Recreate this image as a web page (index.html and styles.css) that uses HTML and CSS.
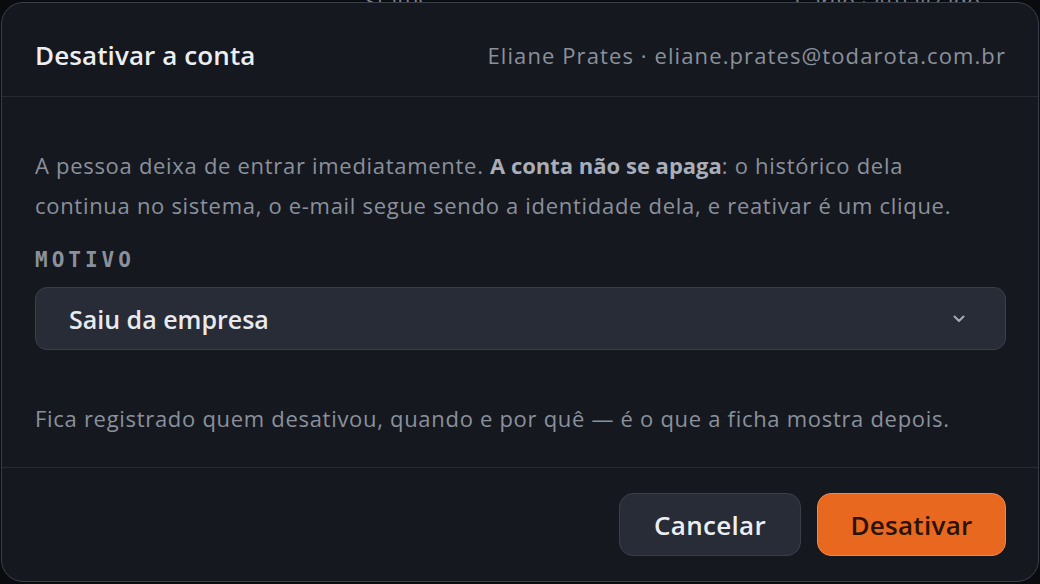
FILE: index.html
```html
<!DOCTYPE html>
<html lang="pt-BR">
<head>
<meta charset="utf-8">
<title>Desativar a conta</title>
<link rel="stylesheet" href="styles.css">
</head>
<body>
<div class="backdrop">
  <span class="bg-a">Status</span>
  <span class="bg-b">Cargo · Atualizado</span>
</div>
<div class="modal">
  <header class="modal-head">
    <h1 class="title">Desativar a conta</h1>
    <div class="who">Eliane Prates · eliane.prates@todarota.com.br</div>
  </header>
  <section class="modal-body">
    <p class="lead">A pessoa deixa de entrar imediatamente. <strong>A conta não se apaga</strong>: o histórico dela continua no sistema, o e-mail segue sendo a identidade dela, e reativar é um clique.</p>
    <div class="label">MOTIVO</div>
    <div class="select">
      <span class="select-value">Saiu da empresa</span>
      <svg class="chev" width="12" height="8" viewBox="0 0 12 8"><path d="M1.5 1.5 6 6l4.5-4.5" fill="none" stroke="currentColor" stroke-width="2" stroke-linecap="round" stroke-linejoin="round"/></svg>
    </div>
    <p class="note">Fica registrado quem desativou, quando e por quê — é o que a ficha mostra depois.</p>
  </section>
  <footer class="modal-foot">
    <button class="btn btn-ghost">Cancelar</button>
    <button class="btn btn-danger">Desativar</button>
  </footer>
</div>
</body>
</html>
```
FILE: styles.css
```css
html, body {
  margin: 0;
  padding: 0;
  background: #0a0b0e;
  font-family: "Open Sans", "Noto Sans", sans-serif;
  overflow: hidden;
}
.backdrop {
  position: absolute;
  top: -14px;
  left: 0;
  right: 0;
  height: 20px;
  color: #7d838d;
  font-size: 22px;
}
.bg-a { position: absolute; left: 365px; }
.bg-b { position: absolute; left: 795px; }
.modal {
  position: relative;
  margin: 2px 1px;
  width: 1038px;
  height: 580px;
  box-sizing: border-box;
  background: #15181f;
  border: 1px solid #3a404b;
  border-radius: 22px;
  display: flex;
  flex-direction: column;
}
.modal-head {
  height: 94px;
  box-sizing: border-box;
  padding: 10px 32px 0 33px;
  display: flex;
  align-items: center;
  justify-content: space-between;
  border-bottom: 1px solid #252a33;
}
.title {
  margin: 0;
  font-size: 26px;
  font-weight: 600;
  color: #eceef2;
  letter-spacing: 0.1px;
}
.who {
  font-size: 22px;
  color: #8a919c;
  letter-spacing: 1.1px;
}
.modal-body {
  padding: 48px 32px 29px 33px;
  border-bottom: 1px solid #252a33;
}
.lead, .note {
  margin: 0;
  font-size: 22px;
  line-height: 40px;
  color: #8a919c;
  letter-spacing: 0.7px;
}
.lead { max-width: 945px; }
.lead strong {
  font-weight: 700;
  color: #a9aeb8;
  letter-spacing: 0;
}
.label {
  margin-top: 23px;
  font-family: "DejaVu Sans Mono", monospace;
  font-weight: 700;
  font-size: 21px;
  line-height: 24px;
  letter-spacing: 4px;
  color: #8a919c;
}
.select {
  margin-top: 15px;
  height: 63px;
  box-sizing: border-box;
  background: #272c36;
  border: 1px solid #3a404b;
  border-radius: 12px;
  padding: 0 40px 0 33px;
  display: flex;
  align-items: center;
  justify-content: space-between;
}
.select-value {
  font-size: 25px;
  font-weight: 600;
  color: #e8eaee;
  letter-spacing: 0;
}
.chev { color: #a6acb6; }
.note { margin-top: 48px; }
.modal-foot {
  flex: 1;
  padding: 0 32px 0 33px;
  display: flex;
  align-items: center;
  justify-content: flex-end;
  gap: 16px;
}
.btn {
  height: 63px;
  border-radius: 14px;
  font-family: inherit;
  font-size: 26px;
  font-weight: 600;
  letter-spacing: 0.3px;
  cursor: pointer;
}
.btn-ghost {
  width: 182px;
  background: #272c36;
  border: 1px solid #3a404b;
  color: #eceef2;
}
.btn-danger {
  width: 189px;
  background: #e8681f;
  border: 1px solid #f0894a;
  color: #2a1206;
}
```
